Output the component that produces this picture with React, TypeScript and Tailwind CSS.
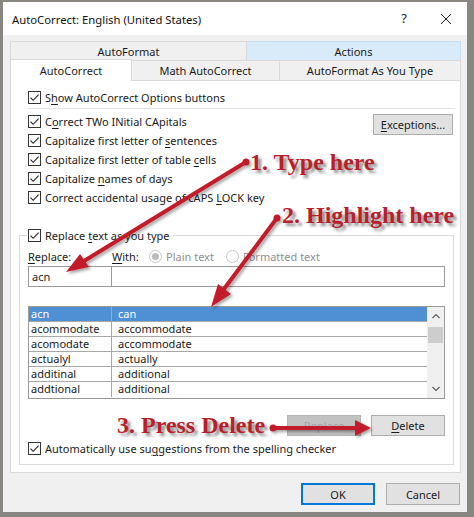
import type { ReactNode } from 'react';

const ui = { fontFamily: '"Noto Sans", "Open Sans", sans-serif' };
const serif = { fontFamily: '"Liberation Serif", "Times New Roman", serif' };

const Check = () => (
  <span className="w-[13px] h-[13px] border border-[#333] bg-white flex items-center justify-center shrink-0">
    <svg width="11" height="11" viewBox="0 0 11 11">
      <path d="M1.5 5.6 L4.2 8.3 L9.6 2.6" fill="none" stroke="#222" strokeWidth="1.1" />
    </svg>
  </span>
);

const CheckRow = ({ children }: { children: ReactNode }) => (
  <div className="h-[19px] flex items-center gap-[4px]">
    <Check />
    <span>{children}</span>
  </div>
);

const U = ({ children }: { children: ReactNode }) => <span className="underline underline-offset-2">{children}</span>;

const rows = [
  ['acn', 'can'],
  ['acommodate', 'accommodate'],
  ['acomodate', 'accommodate'],
  ['actualyl', 'actually'],
  ['additinal', 'additional'],
  ['addtional', 'additional'],
];

const Button = ({ children, className = '' }: { children: ReactNode; className?: string }) => (
  <div className={`h-[21px] flex items-center justify-center border ${className}`}>{children}</div>
);

export default function App() {
  return (
    <div className="w-[474px] h-[517px] bg-[#898580] pl-[3px] pr-[7px] pt-[2px] pb-[5px] text-[11px] leading-[15px] text-[#1a1a1a] relative overflow-hidden" style={ui}>
      <div className="h-full flex flex-col bg-[#f0f0f0]">
        {/* title bar */}
        <div className="h-[33px] bg-white flex items-center pl-[9px] shrink-0">
          <span className="text-[11.3px] text-[#111] mt-[1px]">AutoCorrect: English (United States)</span>
          <span className="ml-auto mr-[33px] text-[13px] text-[#222]">?</span>
          <svg width="12" height="12" viewBox="0 0 12 12" className="mr-[15px]">
            <path d="M1 1 L11 11 M11 1 L1 11" stroke="#222" strokeWidth="1" />
          </svg>
        </div>

        <div className="flex-1 flex flex-col pl-[7px] pr-[6px] pt-[6px]">
          {/* tabs row 1 */}
          <div className="flex h-[19px]">
            <div className="w-[237px] border border-[#d9d9d9] border-b-0 flex items-center justify-center">AutoFormat</div>
            <div className="w-[214px] border border-l-0 border-[#c6dff5] border-b-0 bg-[#d9ebf9] flex items-center justify-center">Actions</div>
          </div>
          {/* tabs row 2 */}
          <div className="flex h-[20px] items-end relative z-10 border-t border-[#d9d9d9]">
            <div className="w-[122px] h-[22px] -mb-px bg-white border border-[#d9d9d9] border-b-0 flex items-center justify-center">AutoCorrect</div>
            <div className="w-[148px] h-[19px] border-r border-[#d9d9d9] flex items-center justify-center">Math AutoCorrect</div>
            <div className="w-[181px] h-[19px] border-r border-[#d9d9d9] flex items-center justify-center">AutoFormat As You Type</div>
          </div>

          {/* panel */}
          <div className="w-[451px] h-[393px] bg-white border border-[#d9d9d9] pt-[7px] flex flex-col">
            <div className="pl-[17px]">
              <CheckRow>S<U>h</U>ow AutoCorrect Options buttons</CheckRow>
            </div>
            <div className="h-px bg-[#e3e3e3] mt-[1px] ml-[17px] mr-[5px]" />
            <div className="flex mt-[3px] pl-[17px] pr-[7px]">
              <div className="flex flex-col">
                <CheckRow>C<U>o</U>rrect TWo INitial CApitals</CheckRow>
                <CheckRow>Capitalize first letter of <U>s</U>entences</CheckRow>
                <CheckRow>Capitalize first letter of table <U>c</U>ells</CheckRow>
                <CheckRow>Capitalize <U>n</U>ames of days</CheckRow>
                <CheckRow>Correct accidental usage of cAPS <U>L</U>OCK key</CheckRow>
              </div>
              <Button className="ml-auto mt-[2px] w-[80px] bg-[#e1e1e1] border-[#adadad]">
                <span><U>E</U>xceptions...</span>
              </Button>
            </div>

            {/* group box */}
            <div className="mt-[28px] ml-[8px] mr-[6px] h-[230px] border border-[#dcdcdc] flex flex-col">
              <div className="-mt-[10px] ml-[7px] w-fit bg-white pr-[3px] pl-[1px]">
                <CheckRow>Replace <U>t</U>ext as you type</CheckRow>
              </div>
              <div className="flex items-center h-[18px] mt-[2px] pl-[8px]">
                <span className="w-[84px]"><U>R</U>eplace:</span>
                <span className="w-[37px]"><U>W</U>ith:</span>
                <span className="w-[13px] h-[13px] rounded-full border border-[#c8c8c8] flex items-center justify-center">
                  <span className="w-[7px] h-[7px] rounded-full bg-[#bcbcbc]" />
                </span>
                <span className="ml-[4px] w-[60px] text-[#8f8f8f]">Plain text</span>
                <span className="w-[13px] h-[13px] rounded-full border border-[#c8c8c8]" />
                <span className="ml-[4px] text-[#8f8f8f]">Formatted text</span>
              </div>
              <div className="flex mt-[1px] ml-[8px] mr-[8px] h-[21px]">
                <div className="w-[84px] border border-[#9a9a9a] flex items-center pl-[3px]">acn</div>
                <div className="flex-1 border border-l-0 border-[#9a9a9a]" />
              </div>

              {/* list */}
              <div className="mt-[19px] ml-[8px] mr-[8px] h-[93px] border border-[#9a9a9a] flex">
                <div className="flex-1 flex flex-col">
                  {rows.map(([a, b], i) => (
                    <div
                      key={a}
                      className={`h-[15px] flex leading-[14px] ${i === 0 ? 'bg-[#4f8fd3] text-white' : ''} ${i < rows.length - 1 ? 'border-b border-[#a8a8a8]' : ''}`}
                    >
                      <span className="w-[83px] pl-[2px] border-r border-[#a8a8a8]">{a}</span>
                      <span className="pl-[6px]">{b}</span>
                    </div>
                  ))}
                </div>
                <div className="w-[17px] bg-[#f0f0f0] flex flex-col items-center">
                  <svg width="10" height="18" viewBox="0 0 10 18">
                    <path d="M1.5 11 L5 7.5 L8.5 11" fill="none" stroke="#606060" strokeWidth="1.2" />
                  </svg>
                  <div className="w-[15px] h-[16px] bg-[#cdcdcd] mt-[2px]" />
                  <svg width="10" height="18" viewBox="0 0 10 18" className="mt-auto">
                    <path d="M1.5 7 L5 10.5 L8.5 7" fill="none" stroke="#606060" strokeWidth="1.2" />
                  </svg>
                </div>
              </div>

              <div className="flex justify-end mt-[16px] mr-[8px] gap-[10px]">
                <Button className="w-[74px] bg-[#c2c2c2] border-[#b5b5b5] text-[#a3a3a3]">Replace</Button>
                <Button className="w-[74px] bg-[#e1e1e1] border-[#adadad]">
                  <span><U>D</U>elete</span>
                </Button>
              </div>
              <div className="pl-[8px] mt-[3px]">
                <CheckRow>Automatically use su<U>g</U>gestions from the spelling checker</CheckRow>
              </div>
            </div>
          </div>

          {/* footer */}
          <div className="flex justify-end gap-[11px] mt-[10px] pr-[1px]">
            <Button className="w-[74px] h-[22px] bg-[#e1e1e1] border-2 border-[#0078d7]">OK</Button>
            <Button className="w-[74px] h-[22px] bg-[#e1e1e1] border-[#adadad]">Cancel</Button>
          </div>
        </div>
      </div>

      {/* annotation overlay */}
      <svg className="absolute left-0 top-0 pointer-events-none" width="474" height="517">
        <defs>
          <filter id="sh" x="-20%" y="-20%" width="140%" height="140%">
            <feDropShadow dx="2" dy="2" stdDeviation="1.5" floodColor="#000" floodOpacity="0.35" />
          </filter>
        </defs>
        <g fill="#c21f2a" stroke="#c21f2a" filter="url(#sh)">
          <line x1="246" y1="162" x2="84" y2="261" strokeWidth="4" strokeLinecap="round" />
          <circle cx="246" cy="162" r="3.5" stroke="none" />
          <polygon points="66,272 89,267 80,254" stroke="none" />
          <line x1="277" y1="218" x2="224" y2="289" strokeWidth="4" strokeLinecap="round" />
          <circle cx="277" cy="218" r="3.5" stroke="none" />
          <polygon points="211,307 231,294 218,284" stroke="none" />
          <line x1="273" y1="428" x2="356" y2="428" strokeWidth="4" strokeLinecap="round" />
          <circle cx="273" cy="428" r="3.5" stroke="none" />
          <polygon points="371,428 355,420 355,436" stroke="none" />
        </g>
      </svg>
      <div className="absolute left-[250px] top-[150px] text-[24px] leading-[24px] font-bold text-[#b81f2b] whitespace-nowrap [text-shadow:3px_3px_3px_rgba(0,0,0,0.45)]" style={serif}>
        1. Type here
      </div>
      <div className="absolute left-[282px] top-[203px] text-[24px] leading-[24px] font-bold text-[#b81f2b] whitespace-nowrap [text-shadow:3px_3px_3px_rgba(0,0,0,0.45)]" style={serif}>
        2. Highlight here
      </div>
      <div className="absolute left-[117px] top-[413px] text-[24px] leading-[24px] font-bold text-[#b81f2b] whitespace-nowrap [text-shadow:3px_3px_3px_rgba(0,0,0,0.45)]" style={serif}>
        3. Press Delete
      </div>
    </div>
  );
}
